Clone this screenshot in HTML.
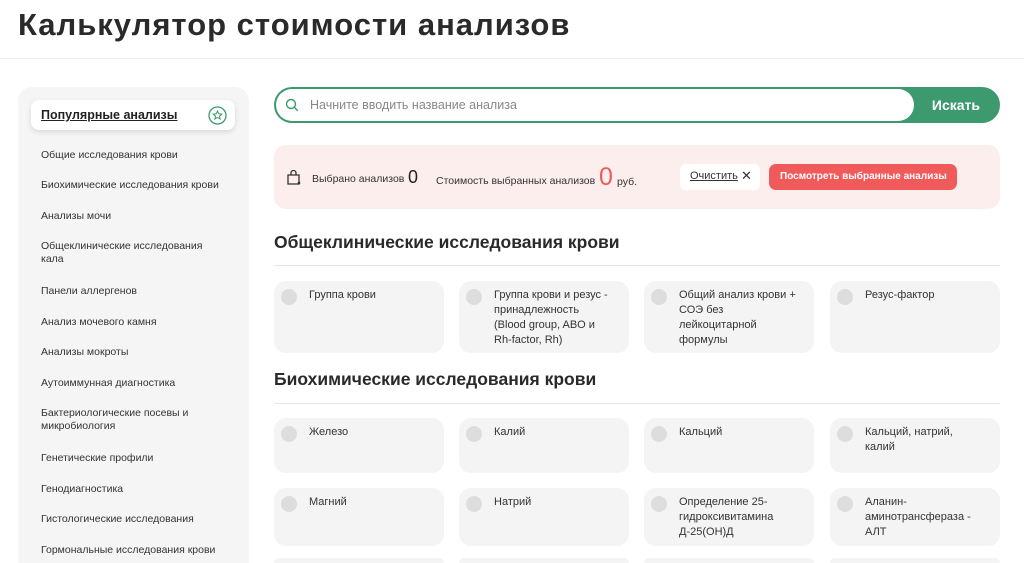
<!DOCTYPE html><html style="width:1024px;height:563px;overflow:hidden"><head><meta charset="utf-8"><style>
body{margin:0;width:1024px;height:563px;overflow:hidden;background:#fff;font-family:"Liberation Sans","Noto Sans CJK SC",sans-serif;color:#333;position:relative}
.a{position:absolute}
h1{position:absolute;left:18px;top:7px;margin:0;font-size:31px;font-weight:600;color:#2a2a2a;letter-spacing:1px}
.hr{position:absolute;left:0;right:0;top:58px;height:1px;background:#ececec}
.side{left:18px;top:87px;width:231px;height:476px;background:#f5f5f5;border-radius:14px 14px 0 0}
.pop{left:31px;top:100px;width:204px;height:30px;background:#fff;border-radius:8px;box-shadow:0 2px 6px rgba(0,0,0,.12)}
.pop span{position:absolute;left:10px;top:8px;font-size:12.5px;text-decoration:underline;color:#222;font-weight:600}
.si{position:absolute;left:41px;font-size:10.5px;color:#333;line-height:13px;width:180px}
.search{left:274px;top:87px;width:722px;height:32px;border:2px solid #3d9a6e;border-radius:18px;background:#3d9a6e}
.search .in{position:absolute;left:0;top:0;width:638px;height:32px;background:#fff;border-radius:16px}
.search .in span{position:absolute;left:34px;top:9px;font-size:12.5px;color:#888}
.search b{position:absolute;right:18px;top:8px;color:#fff;font-size:14px}
.pink{left:274px;top:145px;width:726px;height:64px;background:#fdeeee;border-radius:12px}
.h2{position:absolute;left:274px;font-size:17.5px;font-weight:600;color:#2a2a2a}
.line{position:absolute;left:274px;width:726px;height:1px;background:#e6e6e6}
.card{position:absolute;width:170px;background:#f4f4f4;border-radius:12px}
.card i{position:absolute;left:7px;top:8px;width:16px;height:16px;border-radius:50%;background:#ddd}
.card span{position:absolute;left:35px;top:7px;font-size:11px;line-height:15px;color:#333;width:118px}
</style></head><body>
<h1>Калькулятор стоимости анализов</h1>
<div class="hr"></div>
<div class="a side"></div>
<div class="a pop"><span>Популярные анализы</span>
<svg class="a" style="left:177px;top:6px" width="19" height="19" viewBox="0 0 19 19"><circle cx="9.5" cy="9.5" r="8.5" fill="none" stroke="#3d9a6e" stroke-width="1.3"/><path d="M9.5 5l1.3 2.8 3 .3-2.3 2 .7 3-2.7-1.6-2.7 1.6.7-3-2.3-2 3-.3z" fill="none" stroke="#3d9a6e" stroke-width="1"/></svg></div>
<div class="si" style="top:149px">Общие исследования крови</div>
<div class="si" style="top:179px">Биохимические исследования крови</div>
<div class="si" style="top:210px">Анализы мочи</div>
<div class="si" style="top:240px">Общеклинические исследования кала</div>
<div class="si" style="top:285px">Панели аллергенов</div>
<div class="si" style="top:316px">Анализ мочевого камня</div>
<div class="si" style="top:346px">Анализы мокроты</div>
<div class="si" style="top:377px">Аутоиммунная диагностика</div>
<div class="si" style="top:407px">Бактериологические посевы и микробиология</div>
<div class="si" style="top:452px">Генетические профили</div>
<div class="si" style="top:483px">Генодиагностика</div>
<div class="si" style="top:513px">Гистологические исследования</div>
<div class="si" style="top:544px">Гормональные исследования крови</div>
<div class="a search"><div class="in"><svg class="a" style="left:9px;top:9px" width="14" height="14" viewBox="0 0 14 14"><circle cx="6" cy="6" r="4.5" fill="none" stroke="#3d9a6e" stroke-width="1.4"/><path d="M9.3 9.3l3.5 3.5" stroke="#3d9a6e" stroke-width="1.4"/></svg><span>Начните вводить название анализа</span></div><b>Искать</b></div>
<div class="a pink">
<svg class="a" style="left:12px;top:24px" width="16" height="17" viewBox="0 0 16 17"><path d="M2 6h11v9H2z M5 6V4a2.5 2.5 0 015 0v2" fill="none" stroke="#333" stroke-width="1.3"/><circle cx="13" cy="14" r="1.3" fill="#333"/></svg>
<span class="a" style="left:38px;top:28px;font-size:10.5px">Выбрано анализов</span>
<span class="a" style="left:134px;top:22px;font-size:18px;color:#222">0</span>
<span class="a" style="left:162px;top:30px;font-size:10.5px">Стоимость выбранных анализов</span>
<span class="a" style="left:325px;top:18px;font-size:25px;color:#f05a5a">0</span>
<span class="a" style="left:343px;top:31px;font-size:10.5px">руб.</span>
<div class="a" style="left:406px;top:19px;width:80px;height:26px;background:#fff;border-radius:6px"><span class="a" style="left:10px;top:6px;font-size:11px;text-decoration:underline">Очистить</span><span class="a" style="left:61px;top:4px;font-size:13px">✕</span></div>
<div class="a" style="left:495px;top:19px;width:188px;height:26px;background:#f05a5a;border-radius:7px"><span class="a" style="left:11px;top:7px;font-size:10px;color:#fff;font-weight:bold">Посмотреть выбранные анализы</span></div>
</div>
<div class="h2" style="top:232px">Общеклинические исследования крови</div>
<div class="line" style="top:265px"></div>
<div class="card" style="left:274px;top:281px;height:72px"><i></i><span>Группа крови</span></div>
<div class="card" style="left:459px;top:281px;height:72px"><i></i><span>Группа крови и резус - принадлежность (Blood group, ABO и Rh-factor, Rh)</span></div>
<div class="card" style="left:644px;top:281px;height:72px"><i></i><span>Общий анализ крови + СОЭ без лейкоцитарной формулы</span></div>
<div class="card" style="left:830px;top:281px;height:72px"><i></i><span>Резус-фактор</span></div>
<div class="h2" style="top:369px">Биохимические исследования крови</div>
<div class="line" style="top:403px"></div>
<div class="card" style="left:274px;top:418px;height:55px"><i></i><span>Железо</span></div>
<div class="card" style="left:459px;top:418px;height:55px"><i></i><span>Калий</span></div>
<div class="card" style="left:644px;top:418px;height:55px"><i></i><span>Кальций</span></div>
<div class="card" style="left:830px;top:418px;height:55px"><i></i><span>Кальций, натрий, калий</span></div>
<div class="card" style="left:274px;top:488px;height:58px"><i></i><span>Магний</span></div>
<div class="card" style="left:459px;top:488px;height:58px"><i></i><span>Натрий</span></div>
<div class="card" style="left:644px;top:488px;height:58px"><i></i><span>Определение 25-гидроксивитамина Д-25(ОН)Д</span></div>
<div class="card" style="left:830px;top:488px;height:58px"><i></i><span>Аланин-аминотрансфераза - АЛТ</span></div>
<div class="card" style="left:274px;top:558px;height:5px;border-radius:12px 12px 0 0"></div>
<div class="card" style="left:459px;top:558px;height:5px;border-radius:12px 12px 0 0"></div>
<div class="card" style="left:644px;top:558px;height:5px;border-radius:12px 12px 0 0"></div>
<div class="card" style="left:830px;top:558px;height:5px;border-radius:12px 12px 0 0"></div>
</body></html>
